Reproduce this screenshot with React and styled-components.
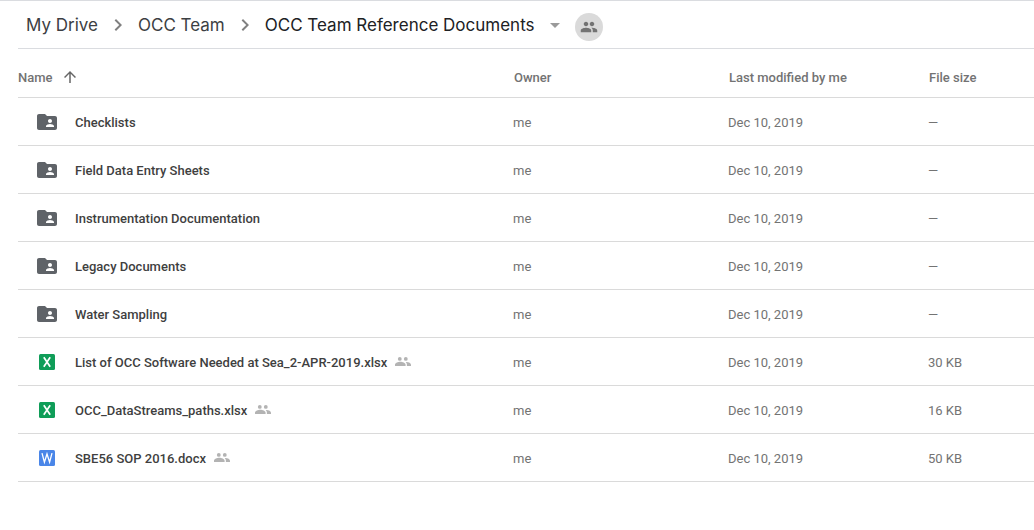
import React from "react";
import styled, { createGlobalStyle } from "styled-components";

const GlobalStyle = createGlobalStyle`
  *, *::before, *::after { box-sizing: border-box; }
  body {
    margin: 0;
    background: #fff;
    font-family: Roboto, "Liberation Sans", sans-serif;
    font-size: 13px;
    color: #737373;
  }
  button { font: inherit; color: inherit; background: none; border: 0; padding: 0; cursor: pointer; }
`;

const Page = styled.main`
  border-top: 1px solid #dadce0;
  padding-left: 18px;
`;

const Toolbar = styled.header`
  display: flex;
  align-items: center;
  height: 48px;
  padding-left: 8px;
  border-bottom: 1px solid #dadce0;
`;

const Crumbs = styled.nav`
  display: flex;
  align-items: center;
  gap: 8px;
  font-family: Inter, Roboto, sans-serif;
  font-size: 17px;
  line-height: 24px;
  white-space: nowrap;
`;

const Crumb = styled.a`
  color: #3c4043;
  text-decoration: none;
`;

const CurrentCrumb = styled.button`
  display: flex;
  align-items: center;
  gap: 8px;
  color: #202124;
`;

const ShareButton = styled.button`
  display: flex;
  align-items: center;
  justify-content: center;
  width: 28px;
  height: 28px;
  margin: 4px 0 0 8px;
  border-radius: 50%;
  background: #dadada;
`;

const Icon = styled.svg`
  display: block;
  flex: none;
  width: ${(p) => p.$size}px;
  height: ${(p) => p.$size}px;
  fill: ${(p) => p.$color};
`;

const FileTable = styled.table`
  width: 100%;
  table-layout: fixed;
  border-collapse: separate;
  border-spacing: 0;
`;

const Col = styled.col`
  width: ${(p) => p.$width};
`;

const HeadCell = styled.th`
  height: 49px;
  padding: 8px 0 0 ${(p) => (p.$inset ? 1 : 0)}px;
  border-bottom: 1px solid #dadada;
  font-weight: 500;
  text-align: left;
  white-space: nowrap;
`;

const SortButton = styled.button`
  display: flex;
  align-items: center;
  gap: 8px;
`;

const Cell = styled.td`
  height: 48px;
  padding: ${(p) => (p.$name ? 0 : 2)}px 0 0;
  border-bottom: 1px solid #dadada;
  white-space: nowrap;
`;

const NameBox = styled.div`
  display: flex;
  align-items: center;
  padding-left: 17px;
  color: #3f3f3f;
  font-weight: 500;
`;

const FileName = styled.span`
  padding-top: 2px;
  margin: 0 8px 0 16px;
`;

const PEOPLE =
  "M16 11c1.66 0 2.99-1.34 2.99-3S17.66 5 16 5c-1.66 0-3 1.34-3 3s1.34 3 3 3zm-8 0c1.66 0 2.99-1.34 2.99-3S9.66 5 8 5C6.34 5 5 6.34 5 8s1.34 3 3 3zm0 2c-2.33 0-7 1.17-7 3.5V19h14v-2.5c0-2.33-4.67-3.5-7-3.5zm8 0c-.29 0-.62.02-.97.05 1.16.84 1.97 1.97 1.97 3.45V19h6v-2.5c0-2.33-4.67-3.5-7-3.5z";

const Glyph = ({ d, size = 24, color = "#737373" }) => (
  <Icon viewBox="0 0 24 24" $size={size} $color={color} aria-hidden="true">
    <path d={d} />
  </Icon>
);

const Chevron = () => (
  <Glyph d="M8.6 16.6 13.2 12 8.6 7.4 10 6l6 6-6 6z" color="#808080" />
);

const SharedMark = () => (
  <Icon viewBox="0 0 16 16" $size={16} $color="#b3b3b3" role="img" aria-label="Shared">
    <circle cx="4.8" cy="4.9" r="1.9" />
    <circle cx="10.8" cy="4.9" r="1.9" />
    <path d="M0 12v-1.2C0 8.7 3.2 7.8 5.3 7.8s5.3.9 5.3 3V12zM11.9 12v-1.3c0-1.1-.4-2-1.2-2.8 3-.2 5.3.9 5.3 2.9V12z" />
  </Icon>
);

const FileIcon = ({ kind }) => {
  if (kind === "folder") {
    return (
      <Glyph
        color="#5f6368"
        d="M20 6h-8l-2-2H4c-1.1 0-1.99.9-1.99 2L2 18c0 1.1.9 2 2 2h16c1.1 0 2-.9 2-2V8c0-1.1-.9-2-2-2zm-5 3c1.1 0 2 .9 2 2s-.9 2-2 2-2-.9-2-2 .9-2 2-2zm4 8h-8v-1c0-1.33 2.67-2 4-2s4 .67 4 2v1z"
      />
    );
  }
  const excel = kind === "excel";
  return (
    <Icon viewBox="0 0 24 24" $size={24} aria-hidden="true">
      <rect x="4" y="4" width="16" height="16" rx="1.5" fill={excel ? "#0f9d58" : "#4a86e8"} />
      <path
        d={excel ? "M8.8 7.2l6.4 9.6M15.2 7.2l-6.4 9.6" : "M7 7.2l2.4 9L12 8l2.6 8.2 2.4-9"}
        fill="none"
        stroke="#fff"
        strokeWidth={excel ? 1.7 : 1.3}
      />
    </Icon>
  );
};

const files = [
  { name: "Checklists", kind: "folder", size: "—" },
  { name: "Field Data Entry Sheets", kind: "folder", size: "—" },
  { name: "Instrumentation Documentation", kind: "folder", size: "—" },
  { name: "Legacy Documents", kind: "folder", size: "—" },
  { name: "Water Sampling", kind: "folder", size: "—" },
  { name: "List of OCC Software Needed at Sea_2-APR-2019.xlsx", kind: "excel", size: "30 KB", shared: true },
  { name: "OCC_DataStreams_paths.xlsx", kind: "excel", size: "16 KB", shared: true },
  { name: "SBE56 SOP 2016.docx", kind: "word", size: "50 KB", shared: true },
];

export default function App() {
  return (
    <>
      <GlobalStyle />
      <Page>
        <Toolbar>
          <Crumbs aria-label="Folder path">
            <Crumb href="#my-drive">My Drive</Crumb>
            <Chevron />
            <Crumb href="#occ-team">OCC Team</Crumb>
            <Chevron />
            <CurrentCrumb type="button">
              OCC Team Reference Documents
              <Glyph d="M7 10l5 5 5-5z" color="#9a9a9a" />
            </CurrentCrumb>
          </Crumbs>
          <ShareButton type="button" aria-label="Manage sharing">
            <Glyph d={PEOPLE} size={18} />
          </ShareButton>
        </Toolbar>
        <FileTable>
          <colgroup>
            <Col />
            <Col $width="215px" />
            <Col $width="200px" />
            <Col $width="106px" />
          </colgroup>
          <thead>
            <tr>
              <HeadCell scope="col" aria-sort="ascending">
                <SortButton type="button">
                  Name
                  <Glyph d="M4 12l1.41 1.41L11 7.83V20h2V7.83l5.58 5.59L20 12l-8-8-8 8z" size={18} color="#666" />
                </SortButton>
              </HeadCell>
              <HeadCell scope="col" $inset>Owner</HeadCell>
              <HeadCell scope="col" $inset>Last modified by me</HeadCell>
              <HeadCell scope="col" $inset>File size</HeadCell>
            </tr>
          </thead>
          <tbody>
            {files.map((file) => (
              <tr key={file.name}>
                <Cell $name>
                  <NameBox>
                    <FileIcon kind={file.kind} />
                    <FileName>{file.name}</FileName>
                    {file.shared && <SharedMark />}
                  </NameBox>
                </Cell>
                <Cell>me</Cell>
                <Cell>Dec 10, 2019</Cell>
                <Cell>{file.size}</Cell>
              </tr>
            ))}
          </tbody>
        </FileTable>
      </Page>
    </>
  );
}
